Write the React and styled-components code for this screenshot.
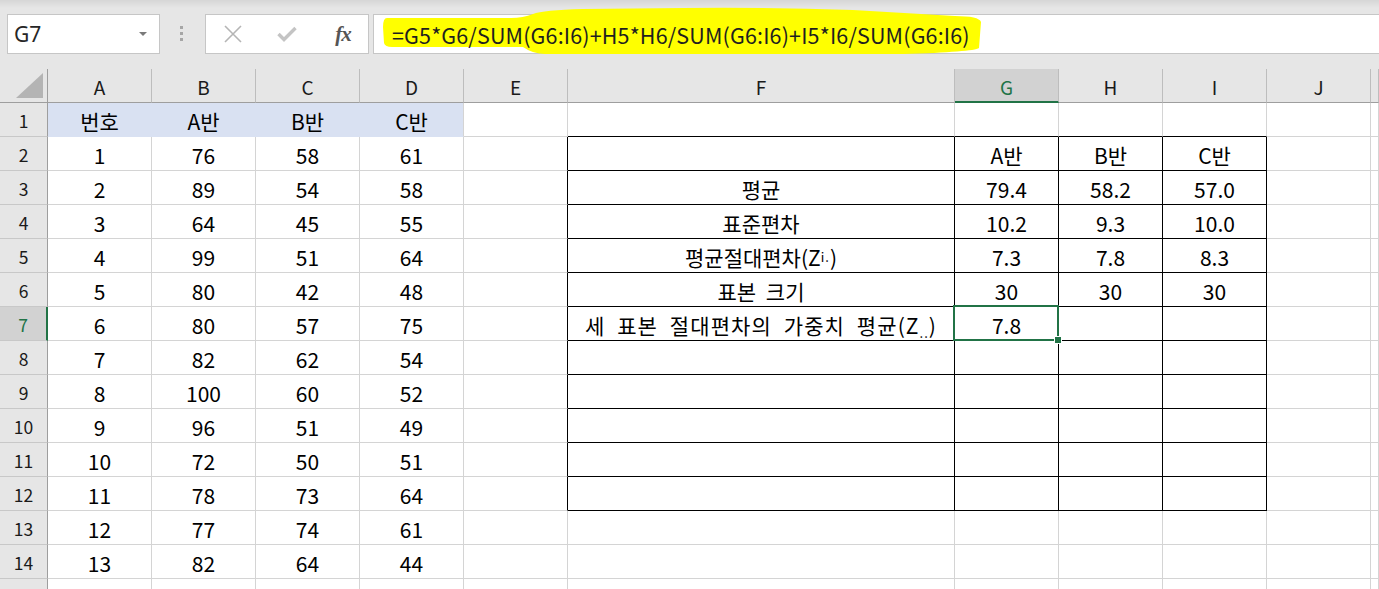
import React from "react";
import styled, { createGlobalStyle, css } from "styled-components";

const GREEN = "#217346";
const GRID = "#d4d4d4";
const BLUE = "#d9e1f2";

const COLS = ["A", "B", "C", "D", "E", "F", "G", "H", "I", "J", "K"];
const TABLE_COLS = ["F", "G", "H", "I"];

const Zi = () => (
  <>
    평균절대편차(Z<Sub>i.</Sub>)
  </>
);
const Zdd = () => (
  <Spaced>
    세 표본 절대편차의 가중치 평균(Z<Sub>..</Sub>)
  </Spaced>
);

const DATA = {
  1: { A: "번호", B: "A반", C: "B반", D: "C반" },
  2: { A: "1", B: "76", C: "58", D: "61", G: "A반", H: "B반", I: "C반" },
  3: { A: "2", B: "89", C: "54", D: "58", F: "평균", G: "79.4", H: "58.2", I: "57.0" },
  4: { A: "3", B: "64", C: "45", D: "55", F: "표준편차", G: "10.2", H: "9.3", I: "10.0" },
  5: { A: "4", B: "99", C: "51", D: "64", F: Zi, G: "7.3", H: "7.8", I: "8.3" },
  6: { A: "5", B: "80", C: "42", D: "48", F: "표본 크기", G: "30", H: "30", I: "30" },
  7: { A: "6", B: "80", C: "57", D: "75", F: Zdd, G: "7.8" },
  8: { A: "7", B: "82", C: "62", D: "54" },
  9: { A: "8", B: "100", C: "60", D: "52" },
  10: { A: "9", B: "96", C: "51", D: "49" },
  11: { A: "10", B: "72", C: "50", D: "51" },
  12: { A: "11", B: "78", C: "73", D: "64" },
  13: { A: "12", B: "77", C: "74", D: "61" },
  14: { A: "13", B: "82", C: "64", D: "44" },
  15: { A: "14", B: "73", C: "56", D: "65" },
};

const ROWS = Object.keys(DATA).map(Number);

function borders(col, row) {
  let right = GRID;
  let bottom = GRID;
  let fill = null;
  if (row === 1 && ["A", "B", "C", "D"].includes(col)) {
    fill = BLUE;
    bottom = BLUE;
    if (col !== "D") right = BLUE;
  }
  const inTable = row >= 2 && row <= 12;
  if (inTable && TABLE_COLS.includes(col)) {
    right = "#000";
    bottom = "#000";
  }
  if (inTable && col === "E") right = "#000";
  if (row === 1 && TABLE_COLS.includes(col)) bottom = "#000";
  return { right, bottom, fill };
}

function renderValue(v) {
  if (!v) return "";
  if (typeof v === "function") {
    const Comp = v;
    return <Comp />;
  }
  return v;
}

export default function App() {
  return (
    <>
      <GlobalStyle />
      <TopBar>
        <NameBox>
          <NameText>G7</NameText>
          <Caret />
        </NameBox>
        <Grip>
          <i />
          <i />
          <i />
        </Grip>
        <ButtonBox>
          <IconSlot>
            <svg width="18" height="18" viewBox="0 0 18 18">
              <path d="M1 1 L17 17 M17 1 L1 17" stroke="#b5b5b5" strokeWidth="1.6" fill="none" />
            </svg>
          </IconSlot>
          <IconSlot>
            <svg width="20" height="16" viewBox="0 0 20 16">
              <path d="M1.5 8 L7 13.5 L18.5 2" stroke="#c4c4c4" strokeWidth="3.4" fill="none" />
            </svg>
          </IconSlot>
          <IconSlot>
            <Fx>fx</Fx>
          </IconSlot>
        </ButtonBox>
        <FormulaBox>
          <Highlight width="600" height="50" viewBox="0 0 600 50">
            <path
              d="M4 11 Q0 11 0 20 L1 36 Q2 40 9 40 L140 40 Q150 47 162 47 L520 47 Q590 45 596 41 L598 15 Q596 9 572 9 L470 3 Q380 0 300 1 L200 2 Q160 3 150 7 Q140 11 128 11 Z"
              fill="#ffff00"
            />
          </Highlight>
          <FormulaText>=G5*G6/SUM(G6:I6)+H5*H6/SUM(G6:I6)+I5*I6/SUM(G6:I6)</FormulaText>
        </FormulaBox>
      </TopBar>

      <Sheet>
        <Corner>
          <svg width="28" height="26" viewBox="0 0 28 26">
            <polygon points="27,0 27,25 0,25" fill="#b4b4b4" />
          </svg>
        </Corner>
        {COLS.map((c) => (
          <ColHead key={c} $active={c === "G"}>
            {c === "K" ? "" : c}
          </ColHead>
        ))}
        {ROWS.map((r) => (
          <React.Fragment key={r}>
            <RowHead $active={r === 7}>{r}</RowHead>
            {COLS.map((c) => {
              const b = borders(c, r);
              return (
                <Cell
                  key={c}
                  $right={b.right}
                  $bottom={b.bottom}
                  $fill={b.fill}
                  $selected={c === "G" && r === 7}
                >
                  {renderValue(DATA[r][c])}
                </Cell>
              );
            })}
          </React.Fragment>
        ))}
      </Sheet>
    </>
  );
}

const GlobalStyle = createGlobalStyle`
  html, body {
    margin: 0;
    padding: 0;
    overflow: hidden;
    background: #ffffff;
  }
  body {
    font-family: "Noto Sans CJK KR", "Noto Sans", sans-serif;
  }
`;

const TopBar = styled.div`
  height: 69px;
  box-sizing: border-box;
  padding: 14px 0 0 7px;
  display: flex;
  align-items: flex-start;
  background: linear-gradient(#d6d6d6, #e6e6e6 8px);
`;

const NameBox = styled.div`
  width: 153px;
  height: 40px;
  box-sizing: border-box;
  border: 1px solid #c6c6c6;
  background: #fff;
  display: flex;
  align-items: center;
  justify-content: space-between;
  padding: 0 12px 0 6px;
`;

const NameText = styled.span`
  font-family: "Noto Sans", "Open Sans", sans-serif;
  font-size: 21px;
  color: #262626;
  line-height: 1;
`;

const Caret = styled.span`
  width: 0;
  height: 0;
  border-left: 4px solid transparent;
  border-right: 4px solid transparent;
  border-top: 4px solid #7a7a7a;
`;

const Grip = styled.div`
  margin: 12px 22px 0 20px;
  display: flex;
  flex-direction: column;
  gap: 3px;

  i {
    display: block;
    width: 3px;
    height: 3px;
    background: #a6a6a6;
  }
`;

const ButtonBox = styled.div`
  width: 164px;
  height: 40px;
  box-sizing: border-box;
  border: 1px solid #c6c6c6;
  background: #fff;
  display: flex;
`;

const IconSlot = styled.div`
  width: 54px;
  display: flex;
  align-items: center;
  justify-content: center;
`;

const Fx = styled.span`
  font-family: "Liberation Serif", serif;
  font-style: italic;
  font-weight: bold;
  font-size: 21px;
  color: #555;
  letter-spacing: -1px;
  margin-left: 4px;
`;

const FormulaBox = styled.div`
  flex: 1;
  margin-left: 4px;
  height: 40px;
  box-sizing: border-box;
  border: 1px solid #c6c6c6;
  border-right: none;
  background: #fff;
  position: relative;
  display: flex;
  align-items: center;
  padding-left: 18px;
`;

const Highlight = styled.svg`
  position: absolute;
  left: 9px;
  top: -8px;
`;

const FormulaText = styled.span`
  position: relative;
  font-size: 21.5px;
  letter-spacing: 0.15px;
  line-height: 1;
  color: #1f1f1f;
  white-space: nowrap;
  padding-top: 1px;
`;

const Sheet = styled.div`
  display: grid;
  grid-template-columns: 48px repeat(5, 104px) 387px repeat(4, 104px) 1fr;
  grid-auto-rows: 34px;
  height: 520px;
  overflow: hidden;
`;

const HeadBase = css`
  box-sizing: border-box;
  background: #e6e6e6;
  display: flex;
  align-items: center;
  justify-content: center;
  line-height: 1;
  color: #1a1a1a;
`;

const Corner = styled.div`
  ${HeadBase};
  border-right: 1px solid #9e9e9e;
  border-bottom: 1px solid #9e9e9e;
  align-items: flex-end;
  justify-content: flex-end;
  padding: 0 3px 3px 0;
`;

const ColHead = styled.div`
  ${HeadBase};
  font-size: 19px;
  padding-top: 2px;
  border-right: 1px solid #bdbdbd;
  border-bottom: 1px solid #9e9e9e;
  ${(p) =>
    p.$active &&
    css`
      background: #d2d2d2;
      color: ${GREEN};
      border-bottom: 2px solid ${GREEN};
    `}
`;

const RowHead = styled.div`
  ${HeadBase};
  font-size: 17.5px;
  padding-top: 2px;
  border-right: 1px solid #9e9e9e;
  border-bottom: 1px solid #c8c8c8;
  ${(p) =>
    p.$active &&
    css`
      background: #d2d2d2;
      color: ${GREEN};
      border-right: 2px solid ${GREEN};
    `}
`;

const Cell = styled.div`
  box-sizing: border-box;
  position: relative;
  border-right: 1px solid ${(p) => p.$right};
  border-bottom: 1px solid ${(p) => p.$bottom};
  background: ${(p) => p.$fill || "#fff"};
  display: flex;
  align-items: center;
  justify-content: center;
  padding-top: 3px;
  font-size: 21px;
  word-spacing: 5px;
  line-height: 1;
  color: #000;
  white-space: nowrap;
  ${(p) =>
    p.$selected &&
    css`
      z-index: 2;
      &::before {
        content: "";
        position: absolute;
        top: -2px;
        left: -2px;
        right: -1px;
        bottom: -1px;
        border: 2px solid ${GREEN};
      }
      &::after {
        content: "";
        position: absolute;
        right: -4px;
        bottom: -4px;
        width: 6px;
        height: 6px;
        background: ${GREEN};
        border: 1px solid #fff;
      }
    `}
`;

const Spaced = styled.span`
  letter-spacing: 1.1px;
  word-spacing: 6px;
`;

const Sub = styled.sub`
  font-size: 13px;
  vertical-align: -4px;
  line-height: 0;
  word-spacing: 0;
  letter-spacing: 1px;
`;
